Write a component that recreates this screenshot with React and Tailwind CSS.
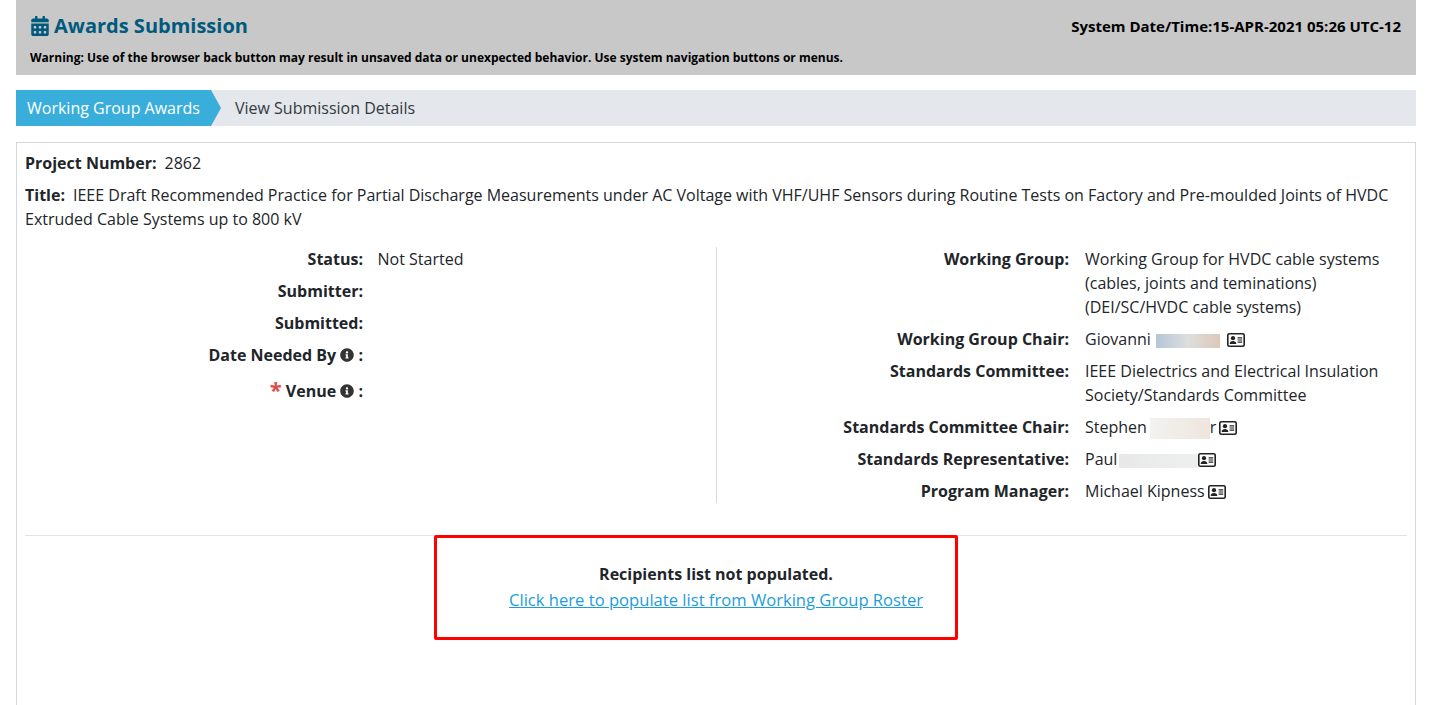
import { FaCalendarAlt, FaInfoCircle } from "react-icons/fa";

function Fila({ label, children, className = "" }) {
  return (
    <div className={`flex ${className}`}>
      <div className="w-[338px] shrink-0 text-right font-bold">{label}</div>
      <div className="pl-[14.5px]">{children}</div>
    </div>
  );
}

function FilaDerecha({ label, children }) {
  return (
    <div className="flex pb-2 last:pb-0">
      <div className="w-[352px] shrink-0 text-right font-bold">{label}</div>
      <div className="pl-4 w-[330px]">{children}</div>
    </div>
  );
}

function Tarjeta({ className = "ml-[3px]" }) {
  return (
    <svg viewBox="0 0 18 14" className={`inline-block h-[14px] w-[18px] align-[-2px] ${className}`}>
      <rect x="0.8" y="0.8" width="16.4" height="12.4" rx="1.5" fill="#fff" stroke="#222" strokeWidth="1.6" />
      <circle cx="6" cy="5.2" r="2.1" fill="#222" />
      <path d="M2.7 10.9c0-2 1.4-2.8 3.3-2.8s3.3.8 3.3 2.8z" fill="#222" />
      <path d="M10.6 4.8h4.6M10.6 7h4.6M10.6 9.2h4.6" stroke="#222" strokeWidth="1.2" />
    </svg>
  );
}

function Borroso({ className }) {
  return <span className={`inline-block align-middle ${className}`}></span>;
}

export default function App() {
  return (
    <div className="h-[705px] overflow-hidden bg-white pl-4 pr-[37px] font-['Open_Sans',sans-serif] text-[16px] leading-6 text-[#212529]">
      <div className="h-[75px] bg-[#c8c8c8] px-[14px]">
        <div className="flex items-center justify-between pt-[14px]">
          <h1 className="flex items-center text-[20px] leading-6 font-bold text-[#005a7d]">
            <FaCalendarAlt className="ml-[1px] mr-[5px] h-[20px] w-[18px] shrink-0" />
            Awards Submission
          </h1>
          <div className="pr-[1px] text-[15px] font-bold text-black">
            System Date/Time:15-APR-2021 05:26 UTC-12
          </div>
        </div>
        <div className="mt-[12px] text-[12px] leading-4 font-bold text-black">
          Warning: Use of the browser back button may result in unsaved data or unexpected behavior. Use system navigation buttons or menus.
        </div>
      </div>

      <div className="mt-[15px] flex h-9 items-center bg-[#e4e7ec]">
        <div className="flex h-full items-center bg-[#3aaedb] pl-[11px] pr-[11px] text-white">
          Working Group Awards
        </div>
        <div className="h-0 w-0 border-y-[18px] border-l-[10px] border-y-transparent border-l-[#3aaedb]"></div>
        <div className="pl-[14px] text-[#343a40]">View Submission Details</div>
      </div>

      <div className="mt-4 h-[600px] border border-[#d5d8dc] px-2 pt-2">
        <div>
          <span className="mr-2 font-bold">Project Number:</span>
          2862
        </div>
        <div className="mt-2">
          <span className="mr-2 font-bold">Title:</span>
          IEEE Draft Recommended Practice for Partial Discharge Measurements under AC Voltage with VHF/UHF Sensors during Routine Tests on Factory and Pre-moulded Joints of HVDC Extruded Cable Systems up to 800 kV
        </div>

        <div className="mt-4 flex border-b border-[#e4e4e4] pb-8">
          <div className="h-[256px] w-[692px] shrink-0 border-r border-[#d8d8d8]">
            <Fila label="Status:" className="pb-2">Not Started</Fila>
            <Fila label="Submitter:" className="pb-2" />
            <Fila label="Submitted:" className="pb-2" />
            <Fila
              label={
                <>
                  Date Needed By <FaInfoCircle className="inline-block text-[14px] text-[#333] align-[-1px]" /> :
                </>
              }
              className="pb-3"
            />
            <Fila
              label={
                <>
                  <span className="text-[22px] leading-4 text-[#dc4c4c] align-[-1px]">*</span> Venue{" "}
                  <FaInfoCircle className="inline-block text-[14px] text-[#333] align-[-1px]" /> :
                </>
              }
            />
          </div>
          <div className="flex-1">
            <FilaDerecha label="Working Group:">
              Working Group for HVDC cable systems (cables, joints and teminations)
              <br />
              (DEI/SC/HVDC cable systems)
            </FilaDerecha>
            <FilaDerecha label="Working Group Chair:">
              Giovanni
              <Borroso className="ml-[5px] h-[14px] w-[64px] bg-gradient-to-r from-[#b4c6d8] via-[#dedede] to-[#dcc8b8]" />
              <Tarjeta className="ml-[7px]" />
            </FilaDerecha>
            <FilaDerecha label="Standards Committee:">
              IEEE Dielectrics and Electrical Insulation Society/Standards Committee
            </FilaDerecha>
            <FilaDerecha label="Standards Committee Chair:">
              Stephen
              <Borroso className="ml-[3px] h-[21px] w-[60px] bg-gradient-to-r from-[#f2f2f0] to-[#eee6de]" />
              r
              <Tarjeta />
            </FilaDerecha>
            <FilaDerecha label="Standards Representative:">
              Paul
              <Borroso className="ml-[2px] h-[14px] w-[79px] bg-gradient-to-r from-[#e8e8e8] to-[#eef0f0]" />
              <Tarjeta className="ml-0" />
            </FilaDerecha>
            <FilaDerecha label="Program Manager:">
              Michael Kipness
              <Tarjeta />
            </FilaDerecha>
          </div>
        </div>

        <div className="relative pt-[25px] text-center leading-[26px]">
          <div className="font-bold">Recipients list not populated.</div>
          <a href="#" className="text-[16.6px] text-[#1b9ddb] underline">
            Click here to populate list from Working Group Roster
          </a>
          <div className="absolute -top-[1px] left-[409px] h-[105px] w-[524px] rounded-[2px] border-[3px] border-[#ff0000]"></div>
        </div>
      </div>
    </div>
  );
}
